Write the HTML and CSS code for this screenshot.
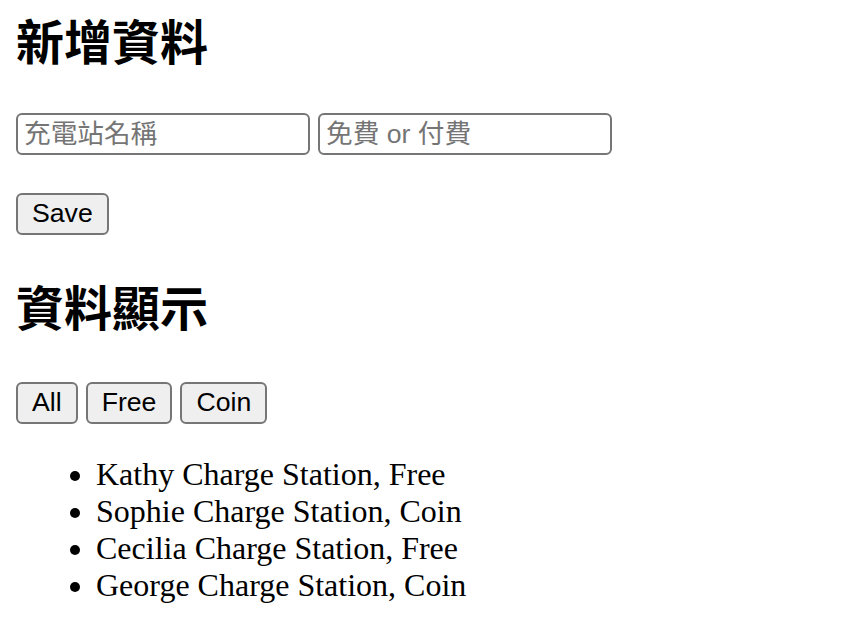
FILE: index.html
```html
<!DOCTYPE html>
<html lang="zh-Hant">
<head>
<meta charset="utf-8">
<title>充電站</title>
<link rel="stylesheet" href="styles.css">
</head>
<body>
<div class="page">
  <h2 class="title">新增資料</h2>
  <div class="form-row">
    <input class="field" type="text" placeholder="充電站名稱">
    <input class="field" type="text" placeholder="免費 or 付費">
  </div>
  <div class="save-row">
    <button class="btn">Save</button>
  </div>
  <h2 class="title title-second">資料顯示</h2>
  <div class="filter-row">
    <button class="btn">All</button>
    <button class="btn">Free</button>
    <button class="btn">Coin</button>
  </div>
  <ul class="list">
    <li>Kathy Charge Station, Free</li>
    <li>Sophie Charge Station, Coin</li>
    <li>Cecilia Charge Station, Free</li>
    <li>George Charge Station, Coin</li>
  </ul>
</div>
</body>
</html>
```

FILE: styles.css
```css
html, body {
  margin: 0;
  padding: 0;
  background: #ffffff;
}

.page {
  padding: 16px 16px 0 16px;
  font-family: "Liberation Serif", "Noto Sans CJK TC", serif;
  color: #000000;
}

.title {
  margin: 0;
  font-family: "Liberation Serif", "Noto Sans CJK TC", serif;
  font-size: 48px;
  line-height: 56px;
  font-weight: 700;
}

.title-second {
  margin-top: 47px;
}

.form-row {
  margin-top: 41px;
  display: flex;
  gap: 8px;
}

.field {
  box-sizing: border-box;
  width: 294px;
  height: 42px;
  margin: 0;
  padding: 2px 6px;
  border: 2px solid #767676;
  border-radius: 6px;
  font-family: "Liberation Sans", "Noto Sans CJK TC", sans-serif;
  font-size: 26.67px;
  color: #000000;
  background: #ffffff;
  outline: none;
}

.field::placeholder {
  color: #757575;
}

.save-row {
  margin-top: 38px;
  display: flex;
}

.filter-row {
  margin-top: 44px;
  display: flex;
  gap: 8px;
}

.btn {
  box-sizing: border-box;
  height: 42px;
  margin: 0;
  padding: 0 14px 2px 14px;
  border: 2px solid #767676;
  border-radius: 6px;
  background: #efefef;
  color: #000000;
  font-family: "Liberation Sans", sans-serif;
  font-size: 26.67px;
  line-height: 1;
}

.list {
  margin: 32px 0 0 0;
  padding-left: 80px;
  font-family: "Liberation Serif", serif;
  font-size: 32px;
  line-height: normal;
}
```
